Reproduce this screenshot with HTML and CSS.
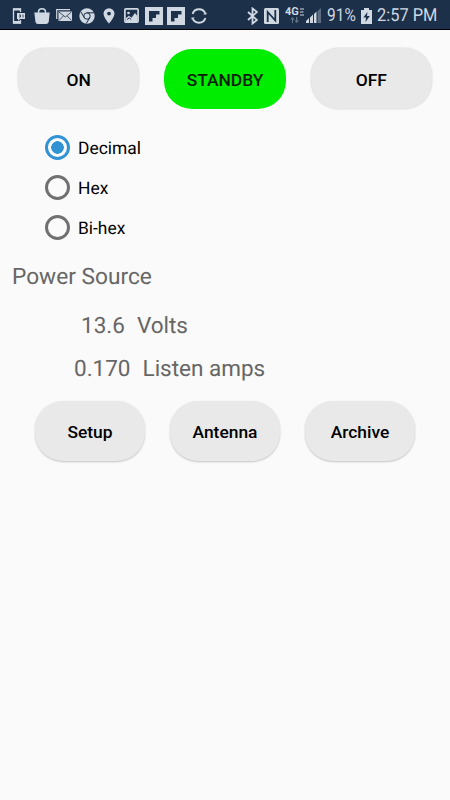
FILE: index.html
```html
<!DOCTYPE html>
<html lang="en">
<head>
    <meta charset="UTF-8">
    <meta name="viewport" content="width=device-width, initial-scale=1.0">
    <title>Power Control</title>
    <link rel="stylesheet" href="styles.css">
</head>
<body>
    <header class="status-bar">
        <div class="notifications">
            <svg class="phone" width="14" height="16" viewBox="0 0 14 16">
                <path d="M8.500 4V1H1.500v14h7v-3" fill="none" stroke="currentColor" stroke-width="1.300"/>
                <path d="M1 .5h8v2H1zM1 13h8v2.500H1z" fill="currentColor"/>
                <path d="M5 5h8v6H8l-2 2v-2H5z" fill="currentColor"/>
                <path d="M7 7h1.500v2H7M11 6.500v3" fill="none" stroke="#1c304a" stroke-width=".8"/>
            </svg>
            <svg class="bag" width="16" height="18" viewBox="0 0 16 18">
                <path d="M4.500 6.500V5C4.500 0.500 11.500 0.500 11.500 5v1.500" fill="none" stroke="currentColor" stroke-width="1.500"/>
                <path d="M.3 5.500h15.400l-1 9.500Q14.200 17 12 17H4Q1.800 17 1.500 15z" fill="currentColor"/>
            </svg>
            <svg class="mail" width="17" height="13" viewBox="0 0 17 13">
                <path d="M.7 10V.7H14" fill="none" stroke="currentColor" stroke-width="1.200"/>
                <path d="M2.500 2.500H16V12H2.500z" fill="currentColor"/>
                <path d="M3 3l6.300 5L15.500 3M3 11.500l4.300-4.500M15.500 11.500L11.200 7" fill="none" stroke="#1c304a" stroke-width=".8"/>
            </svg>
            <svg class="chrome" width="16" height="16" viewBox="0 0 16 16">
                <circle cx="8" cy="8" r="7.700" fill="currentColor"/>
                <circle cx="8" cy="8" r="3.200" fill="none" stroke="#1c304a" stroke-width="1"/>
                <path d="M8 4.800h7M5.200 9.600L1.800 3.700M10.800 9.600L7.300 15.500" stroke="#1c304a" stroke-width="1"/>
            </svg>
            <svg class="pin" width="12" height="16" viewBox="0 0 12 16">
                <path fill-rule="evenodd" d="M6 .3A5.500 5.500 0 0 0 .5 5.600C.5 9.500 6 15.700 6 15.700s5.500-6.200 5.500-10.100A5.500 5.500 0 0 0 6 .3zm0 3.400a1.900 1.900 0 1 1 0 3.800 1.900 1.900 0 0 1 0-3.800z" fill="currentColor"/>
            </svg>
            <svg class="picture" width="15" height="15" viewBox="0 0 15 15">
                <rect x=".9" y=".9" width="13.200" height="13.200" rx="1" fill="none" stroke="currentColor" stroke-width="1.700"/>
                <circle cx="4.500" cy="5" r="1.300" fill="currentColor"/>
                <path d="M2 10l3-2.200 2.500 2L11 5l2.500 3v6H2z" fill="currentColor"/>
                <path d="M3 11.500l2.200-1.600 2 1.600" fill="none" stroke="#1c304a" stroke-width="1"/>
            </svg>
            <svg class="flip" width="18" height="18" viewBox="0 0 18 18">
                <path fill-rule="evenodd" d="M0 0h18v18H0zM4 4v10.500h3.500V11H11V7.500h3.500V4z" fill="currentColor"/>
            </svg>
            <svg class="flip" width="18" height="18" viewBox="0 0 18 18">
                <path fill-rule="evenodd" d="M0 0h18v18H0zM4 4v10.500h3.500V11H11V7.500h3.500V4z" fill="currentColor"/>
            </svg>
            <svg class="sync" width="16" height="16" viewBox="0 0 16 16">
                <path d="M1.600 6A6.700 6.700 0 0 1 14.400 6M14.400 10A6.700 6.700 0 0 1 1.600 10" fill="none" stroke="currentColor" stroke-width="1.900"/>
                <path d="M12 6.500h3.500V4.500zM4 9.500H.5v2z" fill="currentColor"/>
            </svg>
        </div>
        <div class="system">
            <svg class="bluetooth" width="11" height="18" viewBox="0 0 11 18">
                <path d="M1 5l9 8-4.500 3.500v-15L10 5l-9 8" fill="none" stroke="currentColor" stroke-width="1.800"/>
            </svg>
            <svg class="nfc" width="15" height="16" viewBox="0 0 15 16">
                <rect width="15" height="16" rx="1.500" fill="currentColor"/>
                <path d="M3.700 14V4l7.600 8.500V2" fill="none" stroke="#1c304a" stroke-width="1.800"/>
            </svg>
            <div class="network">
                <span>4G</span>
                <svg width="4" height="8" viewBox="0 0 4 8">
                    <path d="M0 1h4M0 4h3.500M0 7h4" stroke="currentColor" stroke-width="1.200"/>
                </svg>
                <svg class="traffic" width="9" height="6" viewBox="0 0 9 6">
                    <path d="M2 6V2.500H.3L2.500 0l2.200 2.500H3V6zM6 0v3.500H4.500L6.700 6 9 3.500H7.300V0z" fill="#65758a"/>
                </svg>
            </div>
            <svg class="signal" width="15" height="15" viewBox="0 0 15 15">
                <path d="M0 15v-2l3-3v5zM4 15V9.500l3-3V15z" fill="currentColor"/>
                <path d="M8 15V6l2.500-2.500V15z" fill="currentColor"/>
                <path d="M11.500 15V3L15 0v15z" fill="#5d6c80"/>
            </svg>
            <span class="percent">91%</span>
            <svg class="battery" width="11" height="16" viewBox="0 0 11 16">
                <path d="M3 0h5v2h3v14H0V2h3z" fill="currentColor"/>
                <path d="M6.500 4L2.300 9.500H5L4.500 14 8.800 8H6z" fill="#1c304a"/>
            </svg>
            <span class="clock">2:57 PM</span>
        </div>
    </header>

    <main>
        <div class="power-buttons">
            <button type="button" class="btn">ON</button>
            <button type="button" class="btn active">STANDBY</button>
            <button type="button" class="btn">OFF</button>
        </div>

        <form class="formats">
            <label><input type="radio" name="format" value="decimal" checked><span>Decimal</span></label>
            <label><input type="radio" name="format" value="hex"><span>Hex</span></label>
            <label><input type="radio" name="format" value="bihex"><span>Bi-hex</span></label>
        </form>

        <section class="power-source">
            <h2>Power Source</h2>
            <div class="reading volts"><span>13.6</span><span>Volts</span></div>
            <div class="reading amps"><span>0.170</span><span>Listen amps</span></div>
        </section>

        <div class="nav-buttons">
            <button type="button" class="btn">Setup</button>
            <button type="button" class="btn">Antenna</button>
            <button type="button" class="btn">Archive</button>
        </div>
    </main>
</body>
</html>
```
FILE: styles.css
```css
* {
    margin: 0;
    padding: 0;
    box-sizing: border-box;
    font-family: Roboto, sans-serif;
}

body {
    background: #fafafa;
    min-height: 100vh;
    color: #000;
    text-rendering: geometricPrecision;
}

.status-bar {
    height: 30px;
    display: flex;
    justify-content: space-between;
    align-items: center;
    padding: 2px 13px 0 12px;
    background: #1c304a;
    border-bottom: 1px solid #000;
    color: #d0d9e2;
}

.status-bar svg {
    display: block;
    flex: none;
}

.notifications,
.system {
    display: flex;
    align-items: center;
}

.bag {
    margin-left: 8px;
}

.mail {
    margin-left: 6px;
}

.chrome {
    margin-left: 6px;
}

.pin {
    margin-left: 8px;
}

.picture {
    margin-left: 9px;
}

.flip {
    margin-left: 6px;
}

.flip + .flip {
    margin-left: 4px;
}

.sync {
    margin-left: 6px;
}

.nfc {
    margin-left: 6px;
}

.network {
    display: grid;
    grid-template-columns: 15px 4px;
    height: 16px;
    width: 19px;
    margin-left: 6px;
    font-size: 11px;
    font-weight: 700;
    line-height: 8px;
}

.traffic {
    margin: 1px 0 0 5px;
}

.signal {
    margin-left: 2px;
}

.percent,
.clock {
    font-size: 18px;
    line-height: 28px;
    white-space: nowrap;
    transform-origin: left center;
}

.percent {
    width: 29px;
    margin-left: 6px;
    transform: scaleX(0.86);
}

.battery {
    margin-left: 5px;
}

.clock {
    width: 60px;
    margin-left: 5px;
    transform: scaleX(0.91);
}

.power-buttons {
    display: flex;
    align-items: center;
    gap: 25px;
    padding: 18px 18px 0;
}

.btn {
    border: none;
    border-radius: 28px;
    background: #e9e9e9;
    box-shadow: 0 1px 2px rgba(0, 0, 0, 0.22);
    font-size: 17.4px;
    font-weight: 500;
    color: #000;
}

.power-buttons .btn {
    flex: 1;
    height: 61px;
    padding-top: 2px;
    box-shadow: 0 0 2px rgba(0, 0, 0, 0.2);
}

.power-buttons .active {
    height: 60px;
    background: #00ed00;
    box-shadow: none;
    color: #092009;
}

.formats {
    padding: 18px 0 0 45px;
}

.formats label {
    display: flex;
    align-items: center;
    gap: 8px;
    height: 40px;
    font-size: 17.4px;
}

.formats span {
    padding-top: 3px;
}

.formats input {
    appearance: none;
    width: 25px;
    height: 25px;
    border: 3px solid #707070;
    border-radius: 50%;
}

.formats input:checked {
    border-color: #3193d4;
    background: radial-gradient(circle, #3193d4 6px, transparent 6.5px);
}

.power-source {
    color: #666;
    font-size: 22.5px;
    line-height: 28px;
}

.power-source h2 {
    padding: 16px 0 0 12px;
    font-size: 22.7px;
    font-weight: 400;
}

.reading {
    display: flex;
    gap: 12px;
}

.volts {
    padding: 21px 0 0 81px;
}

.amps {
    padding: 15px 0 0 74px;
}

.nav-buttons {
    display: flex;
    gap: 25px;
    padding: 18px 35px 0;
}

.nav-buttons .btn {
    flex: 1;
    height: 60px;
    padding-top: 1px;
}
```
